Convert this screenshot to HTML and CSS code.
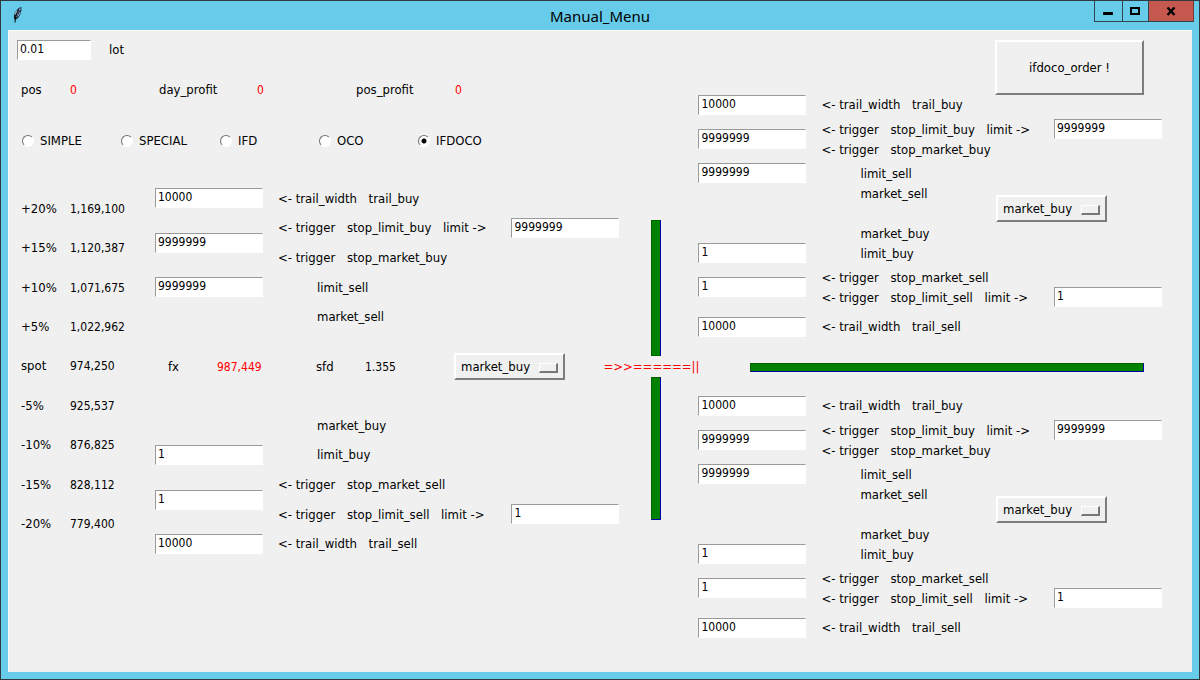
FILE: index.html
```
<!DOCTYPE html>
<html lang="en">
<head>
<meta charset="utf-8">
<title>Manual_Menu</title>
<link rel="stylesheet" href="styles.css">
</head>
<body>
<div class="window">
  <header class="titlebar">
    <svg class="feather" viewBox="0 0 12 18" width="12" height="18" aria-hidden="true">
      <path d="M9.500 1 C5.500 2 3 5 2 9 C1.500 11 2 13 3 14 L5.500 12.500 C8.500 10 9.500 6 9.500 1Z" fill="#16222c"/>
      <path d="M8.500 2.500 C6 5 4.700 8 4.200 11.500 M8.300 6 L6 10.500" stroke="#7ea6dc" stroke-width="1.200" fill="none"/>
      <path d="M7 4 C5 7 3.500 10 3 16.500" stroke="#000" stroke-width="1" fill="none"/>
      <path d="M4.800 4.500 L3 8.500" stroke="#b9d4e8" stroke-width="1" fill="none"/>
    </svg>
    <h1 class="title">Manual_Menu</h1>
    <div class="controls">
      <button class="ctl ctl-min" type="button" aria-label="Minimize"><svg width="11" height="11" viewBox="0 0 11 11"><rect x="0" y="6" width="10" height="3"/></svg></button>
      <button class="ctl ctl-max" type="button" aria-label="Maximize"><svg width="11" height="11" viewBox="0 0 11 11"><path d="M0 1h10v8H0zM2 3v4h6V3z" fill-rule="evenodd"/></svg></button>
      <button class="ctl ctl-close" type="button" aria-label="Close"><svg width="11" height="11" viewBox="0 0 11 11"><path d="M1.500 1.500L8.500 9M8.500 1.500L1.500 9" stroke="#000" stroke-width="2.400"/></svg></button>
    </div>
  </header>

  <main class="client">
    <section class="left">
      <div class="lot">
        <input class="entry entry-lot" id="lot" type="text" value="0.01">
        <label for="lot">lot</label>
      </div>
      <div class="stats">
        <span>pos</span><span class="num red">0</span>
        <span>day_profit</span><span class="num red">0</span>
        <span>pos_profit</span><span class="num red">0</span>
      </div>
      <div class="modes">
        <label class="mode"><input class="radio" type="radio" name="mode">SIMPLE</label>
        <label class="mode"><input class="radio" type="radio" name="mode">SPECIAL</label>
        <label class="mode"><input class="radio" type="radio" name="mode">IFD</label>
        <label class="mode"><input class="radio" type="radio" name="mode">OCO</label>
        <label class="mode"><input class="radio" type="radio" name="mode" checked>IFDOCO</label>
      </div>
      <div class="board">
        <div class="prices">
          <span>+20%</span><span class="num">1,169,100</span>
          <span>+15%</span><span class="num">1,120,387</span>
          <span>+10%</span><span class="num">1,071,675</span>
          <span>+5%</span><span class="num">1,022,962</span>
          <span>spot</span><span class="num">974,250</span>
          <span>-5%</span><span class="num">925,537</span>
          <span>-10%</span><span class="num">876,825</span>
          <span>-15%</span><span class="num">828,112</span>
          <span>-20%</span><span class="num">779,400</span>
        </div>
        <div class="first">
          <div class="half">
            <div class="entries">
              <input class="entry" id="a1" type="text" value="10000">
              <input class="entry" id="a2" type="text" value="9999999">
              <input class="entry" id="a3" type="text" value="9999999">
            </div>
            <div class="names">
              <label for="a1">&lt;- trail_width&emsp;trail_buy</label>
              <label for="a2">&lt;- trigger&emsp;stop_limit_buy&emsp;limit -&gt;</label>
              <label for="a2">&lt;- trigger&emsp;stop_market_buy</label>
              <span class="inset">limit_sell</span>
              <span class="inset">market_sell</span>
            </div>
            <input class="entry limit-high" type="text" value="9999999" aria-label="stop_limit_buy limit">
          </div>
          <div class="spot">
            <span>fx</span><span class="num red">987,449</span>
            <span>sfd</span><span class="num">1.355</span>
            <span class="option"><select class="select" aria-label="First order"><option>market_buy</option><option>market_sell</option></select></span>
          </div>
          <div class="half">
            <div class="entries entries-low">
              <input class="entry" id="a4" type="text" value="1">
              <input class="entry" id="a5" type="text" value="1">
              <input class="entry" id="a6" type="text" value="10000">
            </div>
            <div class="names">
              <span class="inset">market_buy</span>
              <label class="inset" for="a4">limit_buy</label>
              <label for="a5">&lt;- trigger&emsp;stop_market_sell</label>
              <label for="a5">&lt;- trigger&emsp;stop_limit_sell&emsp;limit -&gt;</label>
              <label for="a6">&lt;- trail_width&emsp;trail_sell</label>
            </div>
            <input class="entry limit-low" type="text" value="1" aria-label="stop_limit_sell limit">
          </div>
        </div>
      </div>
    </section>

    <section class="link">
      <div class="vbar vbar-top"></div>
      <span class="signal red">=&gt;&gt;======||</span>
      <div class="vbar vbar-bottom"></div>
    </section>

    <section class="right">
      <div class="actions"><button class="order-button" type="button">ifdoco_order !</button></div>
      <div class="order">
        <div class="order-entries">
          <input class="entry" id="b1" type="text" value="10000">
          <input class="entry" id="b2" type="text" value="9999999">
          <input class="entry" id="b3" type="text" value="9999999">
          <input class="entry entry-after-spot" id="b4" type="text" value="1">
          <input class="entry" id="b5" type="text" value="1">
          <input class="entry entry-last" id="b6" type="text" value="10000">
        </div>
        <div class="order-names">
          <div class="group group-first"><label for="b1">&lt;- trail_width&emsp;trail_buy</label></div>
          <div class="group"><label for="b2">&lt;- trigger&emsp;stop_limit_buy&emsp;limit -&gt;</label><label for="b2">&lt;- trigger&emsp;stop_market_buy</label></div>
          <div class="group"><label class="inset" for="b3">limit_sell</label><span class="inset">market_sell</span></div>
          <div class="group group-buy"><span class="inset">market_buy</span><label class="inset" for="b4">limit_buy</label></div>
          <div class="group"><label for="b5">&lt;- trigger&emsp;stop_market_sell</label><label for="b5">&lt;- trigger&emsp;stop_limit_sell&emsp;limit -&gt;</label></div>
          <div class="group group-last"><label for="b6">&lt;- trail_width&emsp;trail_sell</label></div>
        </div>
        <div class="order-limits">
          <input class="entry" type="text" value="9999999" aria-label="stop_limit_buy limit">
          <span class="option"><select class="select" aria-label="Second order"><option>market_buy</option><option>market_sell</option></select></span>
          <input class="entry" type="text" value="1" aria-label="stop_limit_sell limit">
        </div>
      </div>
      <div class="hbar"></div>
      <div class="order">
        <div class="order-entries">
          <input class="entry" id="c1" type="text" value="10000">
          <input class="entry" id="c2" type="text" value="9999999">
          <input class="entry" id="c3" type="text" value="9999999">
          <input class="entry entry-after-spot" id="c4" type="text" value="1">
          <input class="entry" id="c5" type="text" value="1">
          <input class="entry entry-last" id="c6" type="text" value="10000">
        </div>
        <div class="order-names">
          <div class="group group-first"><label for="c1">&lt;- trail_width&emsp;trail_buy</label></div>
          <div class="group"><label for="c2">&lt;- trigger&emsp;stop_limit_buy&emsp;limit -&gt;</label><label for="c2">&lt;- trigger&emsp;stop_market_buy</label></div>
          <div class="group"><label class="inset" for="c3">limit_sell</label><span class="inset">market_sell</span></div>
          <div class="group group-buy"><span class="inset">market_buy</span><label class="inset" for="c4">limit_buy</label></div>
          <div class="group"><label for="c5">&lt;- trigger&emsp;stop_market_sell</label><label for="c5">&lt;- trigger&emsp;stop_limit_sell&emsp;limit -&gt;</label></div>
          <div class="group group-last"><label for="c6">&lt;- trail_width&emsp;trail_sell</label></div>
        </div>
        <div class="order-limits">
          <input class="entry" type="text" value="9999999" aria-label="stop_limit_buy limit">
          <span class="option"><select class="select" aria-label="Third order"><option>market_buy</option><option>market_sell</option></select></span>
          <input class="entry" type="text" value="1" aria-label="stop_limit_sell limit">
        </div>
      </div>
    </section>
  </main>
</div>
</body>
</html>
```
FILE: styles.css
```
* { box-sizing: border-box; }

body {
  margin: 0;
  font-family: "DejaVu Sans Condensed", "DejaVu Sans", sans-serif;
  font-size: 13px;
  line-height: 20px;
  color: #000;
}

input, select, button { font: inherit; color: inherit; margin: 0; }

.window {
  display: flex;
  flex-direction: column;
  min-height: 100vh;
  padding: 0 7px 7px;
  border: 1px solid #2f3a40;
  background: #67cbea;
}

/* Title bar */
.titlebar {
  display: grid;
  grid-template-columns: 1fr auto 1fr;
  align-items: start;
  height: 29px;
}
.feather { margin: 5px 0 0 4px; }
.title {
  margin: 5px 0 0;
  font-family: "Noto Sans", "Open Sans", sans-serif;
  font-size: 15px;
  font-weight: 400;
  line-height: 20px;
}
.controls { display: flex; justify-self: end; margin-right: -2px; }
.ctl {
  display: flex;
  align-items: center;
  justify-content: center;
  height: 21px;
  padding: 0;
  border: 1px solid #2f4650;
  border-top: 0;
  border-right: 0;
  background: transparent;
}
.ctl-min { width: 28px; }
.ctl-max { width: 26px; }
.ctl-close { width: 46px; border-right: 1px solid #7a3a34; background: #c5594f; }

/* Client area */
.client {
  flex: 1;
  display: grid;
  grid-template-columns: minmax(0, 633fr) 20px minmax(0, 531fr);
  border-top: 1px solid #fafafa;
  border-left: 1px solid #fafafa;
  background: #f0f0f0;
  white-space: nowrap;
}
.num { font-size: 12px; }
.red { color: #f00; }
.inset { padding-left: 39px; }

.entry {
  width: 108px;
  height: 20px;
  padding: 0 2px 2px;
  border: 1px solid #fff;
  border-top-color: #9a9a9a;
  border-left-color: #9a9a9a;
  border-radius: 0;
  background: #fff;
  font-size: 12px;
}

.left { padding: 9px 0 0 8px; }
.lot { display: flex; gap: 18px; }
.entry-lot { width: 74px; }
.stats {
  display: grid;
  grid-template-columns: 49px 89px 98px 99px 99px 1fr;
  margin-top: 20px;
  padding-left: 4px;
}
.modes {
  display: grid;
  grid-template-columns: repeat(5, 99px);
  margin-top: 31px;
  padding-left: 5px;
}
.mode { display: flex; align-items: center; gap: 6px; }
.radio {
  appearance: none;
  width: 12px;
  height: 12px;
  border: 1px solid;
  border-color: #707070 #fff #fff #707070;
  border-radius: 50%;
  background: #fff;
}
.radio:checked { background: radial-gradient(circle, #000 2px, #fff 3px); }

.board {
  display: grid;
  grid-template-columns: 138px 1fr;
  margin-top: 33px;
}
.prices {
  display: grid;
  grid-template-columns: 49px 1fr;
  grid-auto-rows: 1fr;
  align-items: center;
  height: 355px;
  margin-top: 5px;
  padding-left: 4px;
}
.half {
  display: grid;
  grid-template-columns: 108px minmax(0, 1fr) 108px;
  column-gap: 15px;
  padding-right: 22px;
}
.entries {
  display: flex;
  flex-direction: column;
  justify-content: space-between;
  height: 109px;
  margin-top: 4px;
}
.entries-low { margin-top: 34px; }
.names {
  display: grid;
  grid-template-rows: repeat(5, 1fr);
  align-items: center;
  height: 148px;
}
.limit-high { margin-top: 34px; }
.limit-low { margin-top: 93px; }
.spot {
  display: grid;
  grid-template-columns: 49px 99px 49px 89px 1fr;
  align-items: center;
  height: 79px;
  padding: 0 0 10px 13px;
}

/* Raised drop-down with the small bar marker */
.option { position: relative; width: 111px; height: 27px; }
.option::after {
  content: "";
  position: absolute;
  right: 7px;
  top: 10px;
  width: 16px;
  height: 7px;
  border: 1px solid;
  border-color: #fff #777 #777 #fff;
  border-right-width: 2px;
  border-bottom-width: 2px;
  pointer-events: none;
}
.select, .order-button {
  appearance: none;
  border: 2px solid;
  border-color: #fff #7d7d7d #7d7d7d #fff;
  border-radius: 0;
  background: #f0f0f0;
}
.select { width: 100%; height: 27px; padding: 0 5px; }

/* Link between the first and the follow-up orders */
.link {
  display: flex;
  flex-direction: column;
  align-items: center;
  padding-top: 189px;
}
.vbar, .hbar { border: 1px solid #006400; border-right-color: #00a; background: #008200; }
.vbar { align-self: flex-end; width: 10px; }
.vbar-top { height: 136px; }
.vbar-bottom { height: 143px; border-bottom-color: #00a; }
.signal { line-height: 21px; }

.right { padding: 9px 30px 0 37px; }
.actions { display: flex; justify-content: flex-end; padding-right: 18px; }
.order-button { width: 149px; height: 55px; }
.order {
  display: grid;
  grid-template-columns: 108px minmax(0, 1fr) 166px;
  column-gap: 15px;
}
.order-entries { display: flex; flex-direction: column; gap: 14px; }
.entry-after-spot { margin-top: 46px; }
.entry-last { margin-top: 6px; }
.order-names { display: flex; flex-direction: column; gap: 4px; }
.group { display: flex; flex-direction: column; }
.group-first { margin-bottom: 1px; }
.group-buy { margin-top: 16px; }
.group-last { margin-top: 5px; }
.order-limits { display: flex; flex-direction: column; align-items: flex-end; padding-top: 24px; }
.order-limits .option { align-self: flex-start; margin: 56px 0 65px; }
.hbar { height: 9px; margin: 26px 18px 24px 52px; border-bottom-color: #00a; }
```
